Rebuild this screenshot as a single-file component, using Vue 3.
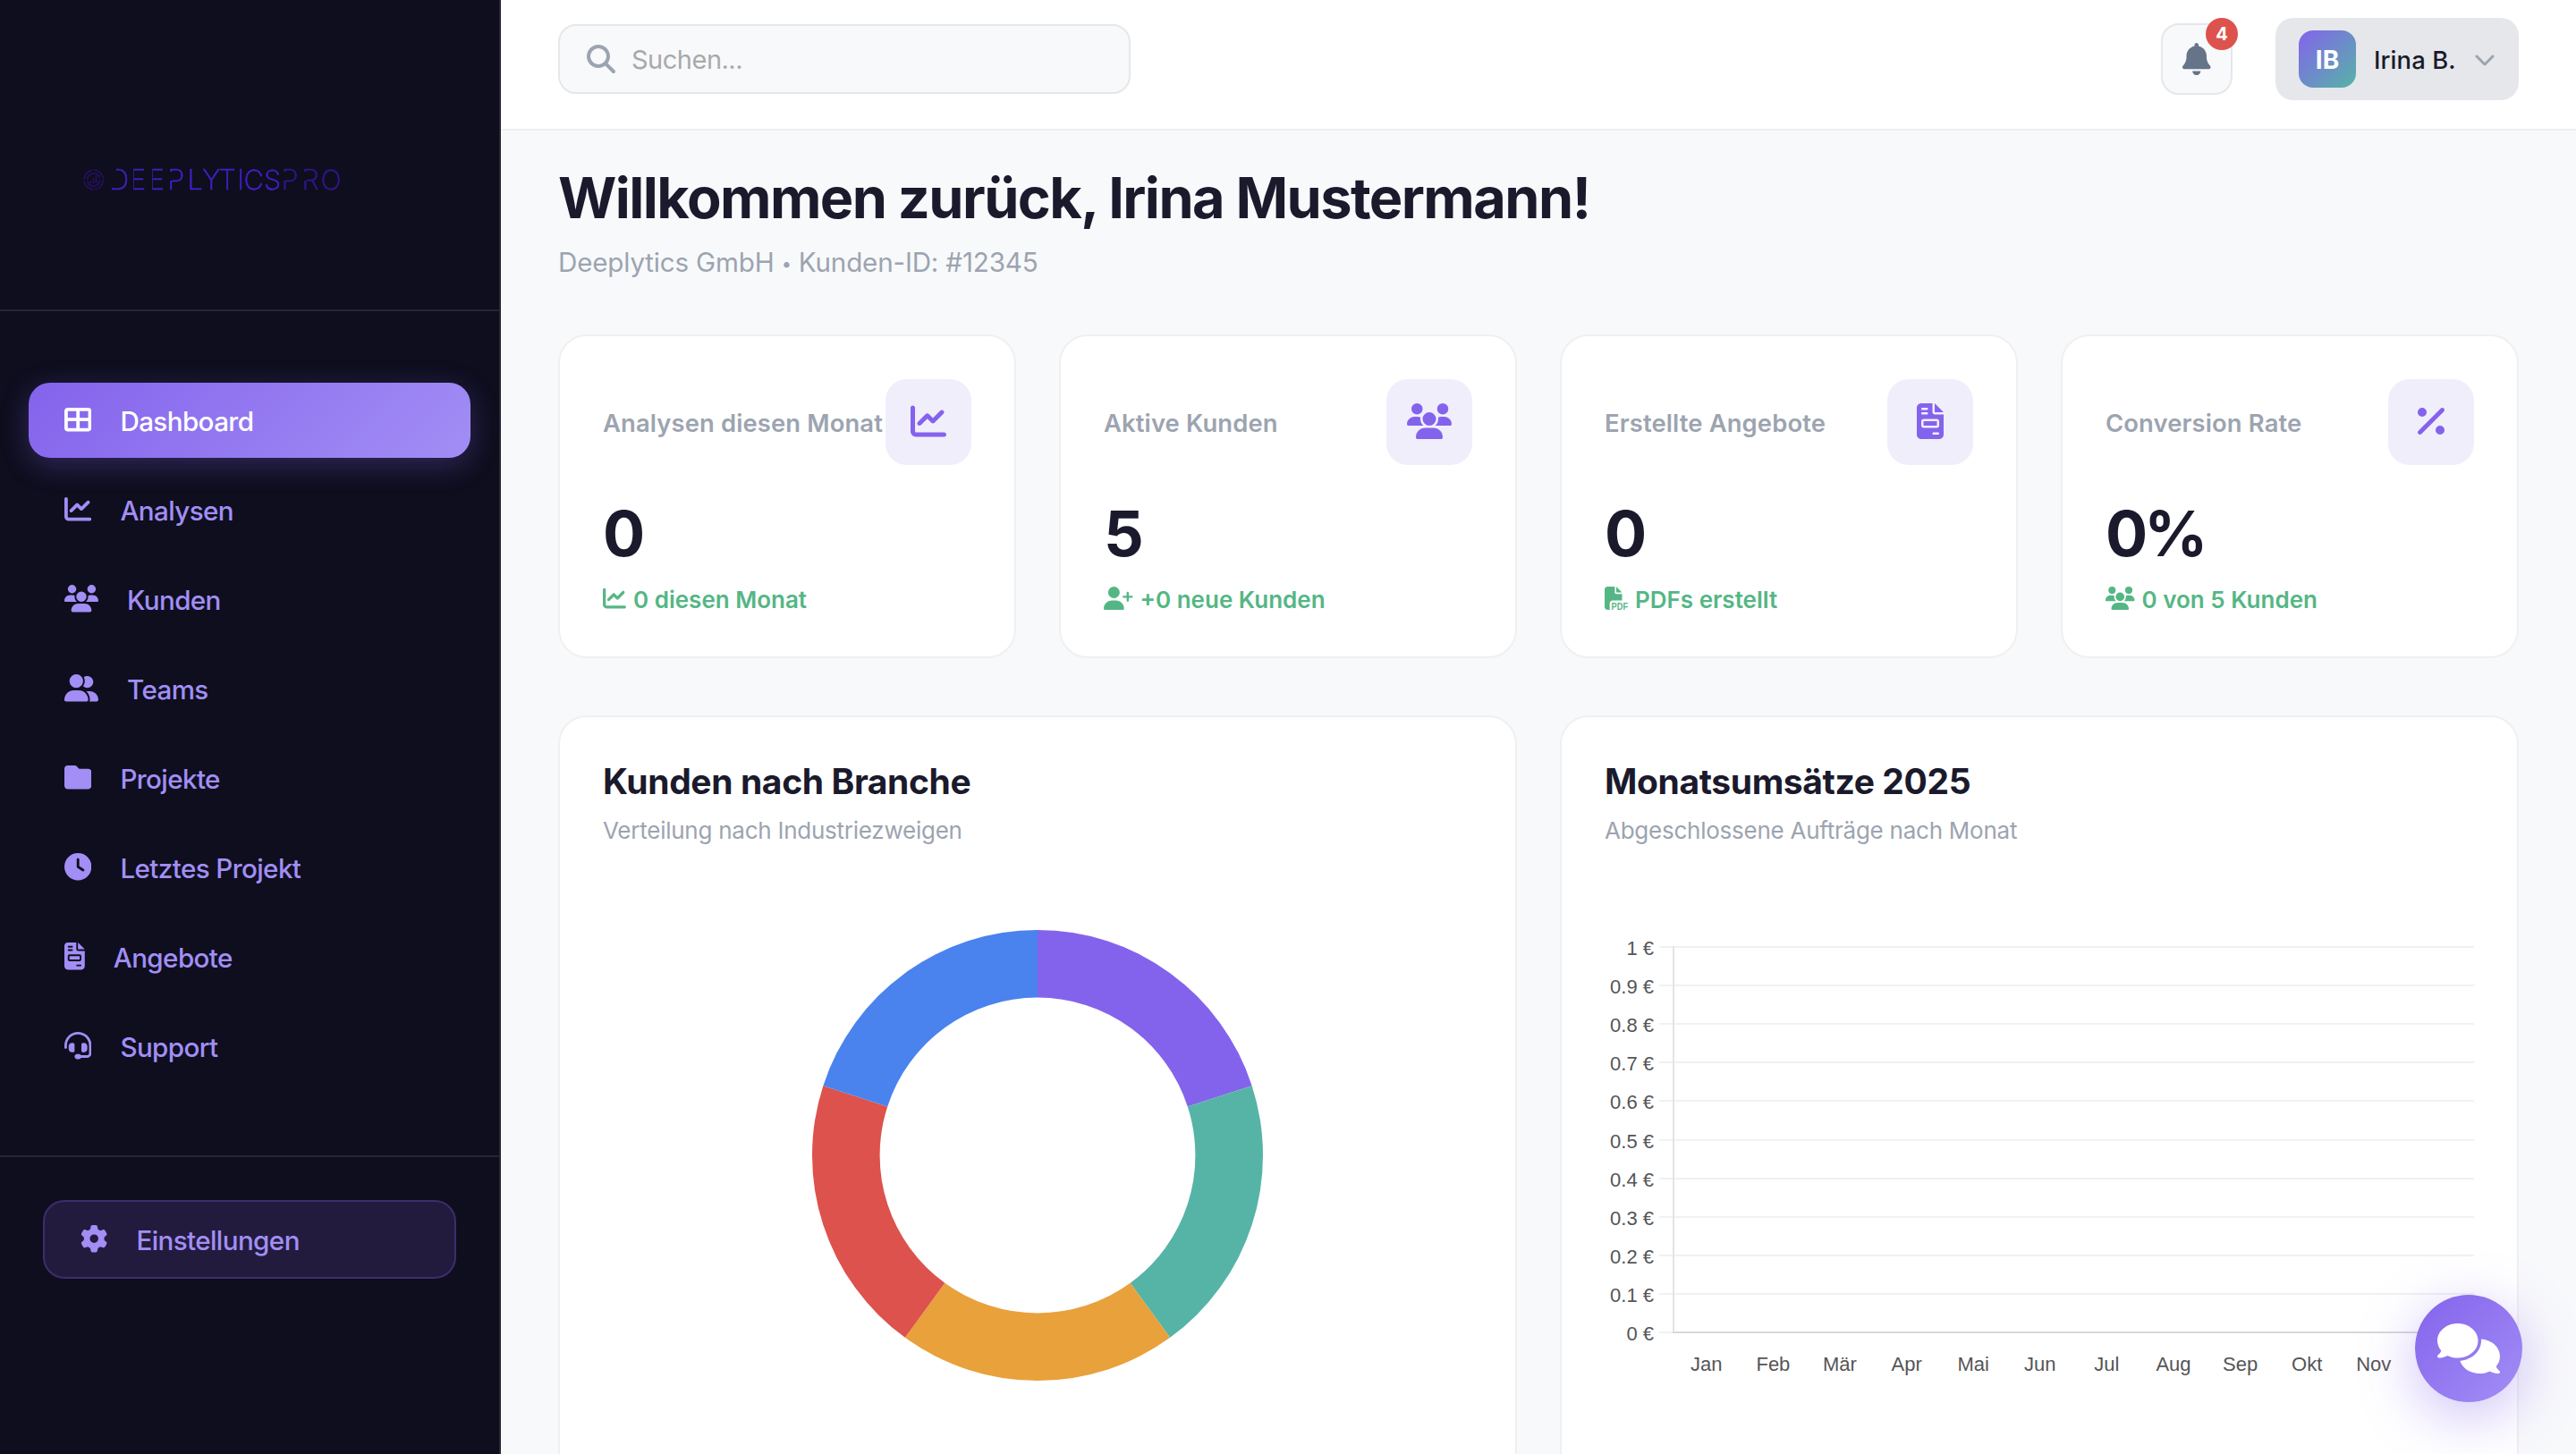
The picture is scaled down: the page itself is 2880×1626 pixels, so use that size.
<script setup>
import { computed, ref } from "vue";

// iconos: ancho del viewBox y trazado
const icons = {
  grid: {
    w: 512,
    d: "M448 96V224H288V96H448zm0 192V416H288V288H448zM224 224H64V96H224V224zM64 288H224V416H64V288zM64 32C28.7 32 0 60.7 0 96V416c0 35.3 28.7 64 64 64H448c35.3 0 64-28.7 64-64V96c0-35.3-28.7-64-64-64H64z",
  },
  chart: {
    w: 512,
    d: "M64 64c0-17.7-14.3-32-32-32S0 46.3 0 64V400c0 44.2 35.8 80 80 80H480c17.7 0 32-14.3 32-32s-14.3-32-32-32H80c-8.8 0-16-7.2-16-16V64zm406.6 86.6c12.5-12.5 12.5-32.8 0-45.3s-32.8-12.5-45.3 0L320 210.7l-57.4-57.4c-12.5-12.5-32.8-12.5-45.3 0l-112 112c-12.5 12.5-12.5 32.8 0 45.3s32.8 12.5 45.3 0L240 221.3l57.4 57.4c12.5 12.5 32.8 12.5 45.3 0l128-128z",
  },
  users: {
    w: 640,
    d: "M144 0a80 80 0 1 1 0 160A80 80 0 1 1 144 0zM512 0a80 80 0 1 1 0 160A80 80 0 1 1 512 0zM0 298.7C0 239.8 47.8 192 106.7 192h42.7c15.9 0 31 3.5 44.6 9.7c-1.3 7.2-1.9 14.7-1.9 22.3c0 38.2 16.8 72.5 43.3 96c-.2 0-.4 0-.7 0H21.3C9.6 320 0 310.4 0 298.7zM405.3 320c-.2 0-.4 0-.7 0c26.6-23.5 43.3-57.8 43.3-96c0-7.6-.7-15-1.9-22.3c13.6-6.3 28.7-9.7 44.6-9.7h42.7C592.2 192 640 239.8 640 298.7c0 11.8-9.6 21.3-21.3 21.3H405.3zM224 224a96 96 0 1 1 192 0 96 96 0 1 1 -192 0zM128 485.3C128 411.7 187.7 352 261.3 352H378.7C452.3 352 512 411.7 512 485.3c0 14.7-11.9 26.7-26.7 26.7H154.7c-14.7 0-26.7-11.9-26.7-26.7z",
  },
  group: {
    w: 640,
    d: "M96 128a128 128 0 1 1 256 0A128 128 0 1 1 96 128zM0 482.3C0 383.8 79.8 304 178.3 304h91.4C368.2 304 448 383.8 448 482.3c0 16.4-13.3 29.7-29.7 29.7H29.7C13.3 512 0 498.7 0 482.3zM609.3 512H471.4c5.4-9.4 8.6-20.3 8.6-32v-8c0-60.7-27.1-115.2-69.8-151.8c2.4-.1 4.7-.2 7.1-.2h61.4C567.8 320 640 392.2 640 481.3c0 17-13.8 30.7-30.7 30.7zM432 256c-31 0-59-12.6-79.3-32.9C372.4 196.5 384 163.6 384 128c0-26.8-6.6-52.1-18.3-74.3C384.3 40.1 407.2 32 432 32c61.9 0 112 50.1 112 112s-50.1 112-112 112z",
  },
  folder: {
    w: 512,
    d: "M64 480H448c35.3 0 64-28.7 64-64V160c0-35.3-28.7-64-64-64H288c-10.1 0-19.6-4.7-25.6-12.8L243.2 57.6C231.1 41.5 212.1 32 192 32H64C28.7 32 0 60.7 0 96V416c0 35.3 28.7 64 64 64z",
  },
  clock: {
    w: 512,
    d: "M256 0a256 256 0 1 1 0 512A256 256 0 1 1 256 0zM232 120V256c0 8 4 15.5 10.7 20l96 64c11 7.4 25.9 4.4 33.3-6.7s4.4-25.9-6.7-33.3L280 243.2V120c0-13.3-10.7-24-24-24s-24 10.7-24 24z",
  },
  invoice: {
    w: 384,
    d: "M64 0C28.7 0 0 28.7 0 64V448c0 35.3 28.7 64 64 64H320c35.3 0 64-28.7 64-64V160H256c-17.7 0-32-14.3-32-32V0H64zM256 0V128H384L256 0zM80 64h64c8.8 0 16 7.2 16 16s-7.2 16-16 16H80c-8.8 0-16-7.2-16-16s7.2-16 16-16zm0 64h64c8.8 0 16 7.2 16 16s-7.2 16-16 16H80c-8.8 0-16-7.2-16-16s7.2-16 16-16zm16 96H288c17.7 0 32 14.3 32 32v64c0 17.7-14.3 32-32 32H96c-17.7 0-32-14.3-32-32V256c0-17.7 14.3-32 32-32zm0 32v64H288V256H96zM240 416h64c8.8 0 16 7.2 16 16s-7.2 16-16 16H240c-8.8 0-16-7.2-16-16s7.2-16 16-16z",
  },
  headset: {
    w: 512,
    d: "M256 48C141.1 48 48 141.1 48 256v40c0 13.3-10.7 24-24 24s-24-10.7-24-24V256C0 114.6 114.6 0 256 0S512 114.6 512 256V400.1c0 48.6-39.4 88-88.1 88L313.6 488c-8.3 14.3-23.8 24-41.6 24H240c-26.5 0-48-21.5-48-48s21.5-48 48-48h32c17.8 0 33.3 9.7 41.6 24l110.4 .1c22.1 0 40-17.9 40-40V256c0-114.9-93.1-208-208-208zM144 208h16c17.7 0 32 14.3 32 32V352c0 17.7-14.3 32-32 32H144c-35.3 0-64-28.7-64-64V272c0-35.3 28.7-64 64-64zm224 0c35.3 0 64 28.7 64 64v48c0 35.3-28.7 64-64 64H352c-17.7 0-32-14.3-32-32V240c0-17.7 14.3-32 32-32h16z",
  },
  gear: {
    w: 512,
    d: "M495.9 166.6c3.2 8.7 .5 18.4-6.4 24.6l-43.3 39.4c1.1 8.3 1.7 16.8 1.7 25.4s-.6 17.1-1.7 25.4l43.3 39.4c6.9 6.2 9.6 15.9 6.4 24.6c-4.4 11.9-9.7 23.3-15.8 34.3l-4.7 8.1c-6.6 11-14 21.4-22.1 31.2c-5.9 7.2-15.7 9.6-24.5 6.8l-55.7-17.7c-13.4 10.3-28.2 18.9-44 25.4l-12.5 57.1c-2 9.1-9 16.3-18.2 17.8c-13.8 2.3-28 3.5-42.5 3.5s-28.7-1.2-42.5-3.5c-9.2-1.5-16.2-8.7-18.2-17.8l-12.5-57.1c-15.8-6.5-30.6-15.1-44-25.4L83.1 425.9c-8.8 2.8-18.6 .3-24.5-6.8c-8.1-9.8-15.5-20.2-22.1-31.2l-4.7-8.1c-6.1-11-11.4-22.4-15.8-34.3c-3.2-8.7-.5-18.4 6.4-24.6l43.3-39.4C64.6 273.1 64 264.6 64 256s.6-17.1 1.7-25.4L22.4 191.2c-6.9-6.2-9.6-15.9-6.4-24.6c4.4-11.9 9.7-23.3 15.8-34.3l4.7-8.1c6.6-11 14-21.4 22.1-31.2c5.9-7.2 15.7-9.6 24.5-6.8l55.7 17.7c13.4-10.3 28.2-18.9 44-25.4l12.5-57.1c2-9.1 9-16.3 18.2-17.8C227.3 1.2 241.5 0 256 0s28.7 1.2 42.5 3.5c9.2 1.5 16.2 8.7 18.2 17.8l12.5 57.1c15.8 6.5 30.6 15.1 44 25.4l55.7-17.7c8.8-2.8 18.6-.3 24.5 6.8c8.1 9.8 15.5 20.2 22.1 31.2l4.7 8.1c6.1 11 11.4 22.4 15.8 34.3zM256 336a80 80 0 1 0 0-160 80 80 0 1 0 0 160z",
  },
  percent: {
    w: 384,
    d: "M374.6 118.6c12.5-12.5 12.5-32.8 0-45.3s-32.8-12.5-45.3 0l-320 320c-12.5 12.5-12.5 32.8 0 45.3s32.8 12.5 45.3 0l320-320zM128 128A64 64 0 1 0 0 128a64 64 0 1 0 128 0zM384 384a64 64 0 1 0 -128 0 64 64 0 1 0 128 0z",
  },
  userPlus: {
    w: 640,
    d: "M96 128a128 128 0 1 1 256 0A128 128 0 1 1 96 128zM0 482.3C0 383.8 79.8 304 178.3 304h91.4C368.2 304 448 383.8 448 482.3c0 16.4-13.3 29.7-29.7 29.7H29.7C13.3 512 0 498.7 0 482.3zM504 312V248H440c-13.3 0-24-10.7-24-24s10.7-24 24-24h64V136c0-13.3 10.7-24 24-24s24 10.7 24 24v64h64c13.3 0 24 10.7 24 24s-10.7 24-24 24H552v64c0 13.3-10.7 24-24 24s-24-10.7-24-24z",
  },
  pdf: {
    w: 512,
    d: "M0 64C0 28.7 28.7 0 64 0H224V128c0 17.7 14.3 32 32 32H384V304H176c-35.3 0-64 28.7-64 64V512H64c-35.3 0-64-28.7-64-64V64zm384 64H256V0L384 128z",
    label: "PDF",
  },
};

const activeItem = ref("Dashboard");

const menu = [
  { name: "Dashboard", icon: icons.grid },
  { name: "Analysen", icon: icons.chart },
  { name: "Kunden", icon: icons.users },
  { name: "Teams", icon: icons.group },
  { name: "Projekte", icon: icons.folder },
  { name: "Letztes Projekt", icon: icons.clock },
  { name: "Angebote", icon: icons.invoice },
  { name: "Support", icon: icons.headset },
];

const stats = [
  { label: "Analysen diesen Monat", value: "0", icon: icons.chart, trend: "0 diesen Monat", trendIcon: icons.chart },
  { label: "Aktive Kunden", value: "5", icon: icons.users, trend: "+0 neue Kunden", trendIcon: icons.userPlus },
  { label: "Erstellte Angebote", value: "0", icon: icons.invoice, trend: "PDFs erstellt", trendIcon: icons.pdf },
  { label: "Conversion Rate", value: "0%", icon: icons.percent, trend: "0 von 5 Kunden", trendIcon: icons.users },
];

const branches = [
  { value: 1, color: "#8463ec" },
  { value: 1, color: "#56b4a7" },
  { value: 1, color: "#e8a13b" },
  { value: 1, color: "#dd524c" },
  { value: 1, color: "#4a83ee" },
];

// segmentos del donut
const segments = computed(() => {
  const total = branches.reduce((sum, b) => sum + b.value, 0);
  const point = (r, a) => `${252 + r * Math.sin(a)} ${252 - r * Math.cos(a)}`;
  let start = 0;
  return branches.map((b) => {
    const end = start + (b.value / total) * Math.PI * 2;
    const d = `M${point(252, start)}A252 252 0 0 1 ${point(252, end)}L${point(176.4, end)}A176.4 176.4 0 0 0 ${point(176.4, start)}Z`;
    start = end;
    return { d, color: b.color };
  });
});

const months = ["Jan", "Feb", "Mär", "Apr", "Mai", "Jun", "Jul", "Aug", "Sep", "Okt", "Nov", "Dez"];

// líneas del eje Y, de 1 € hasta 0 €
const gridLines = Array.from({ length: 11 }, (_, i) => ({
  y: Math.round(115 + i * 43.1),
  label: `${(10 - i) / 10} €`,
}));
</script>

<template>
  <div class="app">
    <aside class="sidebar">
      <div class="sidebar-logo">
        <svg class="logo" width="310" height="60" viewBox="88 170 310 60">
          <defs>
            <mask id="cut" maskUnits="userSpaceOnUse" x="88" y="170" width="310" height="60">
              <rect x="88" y="170" width="310" height="60" fill="#fff" />
              <rect x="120" y="192" width="9" height="18" />
              <rect x="120" y="186" width="10" height="10" />
              <rect x="144" y="186" width="5.2" height="30" />
              <rect x="165" y="186" width="5.2" height="30" />
              <rect x="188" y="192" width="5" height="10" />
              <rect x="314" y="192" width="6" height="10" />
              <rect x="338" y="192" width="5" height="10" />
            </mask>
          </defs>
          <g class="logo-mark">
            <circle cx="104.7" cy="201" r="10.8" stroke-dasharray="15 2" />
            <circle cx="104.7" cy="201" r="7.2" stroke-dasharray="20.6 2" />
            <path d="M101.5 205v-3M104.5 205v-6M107.5 205v-9" />
          </g>
          <g class="logo-text" mask="url(#cut)">
            <text
              class="logo-name"
              y="212.3"
              x="122 145 166 187.3 209.5 226.3 244.6 265.2 272.6 295"
            >DEEPLYTICS</text>
            <text class="logo-pro" y="212.3" x="314.6 337.6 358.6">PRO</text>
          </g>
        </svg>
      </div>

      <nav class="menu">
        <a
          v-for="item in menu"
          :key="item.name"
          class="menu-item"
          :class="{ active: item.name === activeItem }"
          @click="activeItem = item.name"
        >
          <svg class="icon" :viewBox="`0 0 ${item.icon.w} 512`">
            <path fill-rule="evenodd" :d="item.icon.d" />
          </svg>
          <span>{{ item.name }}</span>
        </a>
      </nav>

      <div class="sidebar-footer">
        <a class="settings">
          <svg class="icon" viewBox="0 0 512 512"><path :d="icons.gear.d" /></svg>
          <span>Einstellungen</span>
        </a>
      </div>
    </aside>

    <main class="main">
      <header class="topbar">
        <div class="search">
          <svg class="search-icon" viewBox="0 0 512 512">
            <path
              d="M416 208c0 45.9-14.9 88.3-40 122.7L502.6 457.4c12.5 12.5 12.5 32.8 0 45.3s-32.8 12.5-45.3 0L330.7 376c-34.4 25.2-76.8 40-122.7 40C93.1 416 0 322.9 0 208S93.1 0 208 0S416 93.1 416 208zM208 352a144 144 0 1 0 0-288 144 144 0 1 0 0 288z"
            />
          </svg>
          <span>Suchen...</span>
        </div>
        <div class="topbar-right">
          <div class="bell">
            <svg class="bell-icon" viewBox="0 0 448 512">
              <path
                d="M224 0c-17.7 0-32 14.3-32 32V51.2C119 66 64 130.6 64 208v18.8c0 47-17.3 92.4-48.5 127.6l-7.4 8.3c-8.4 9.4-10.4 22.9-5.3 34.4S19.4 416 32 416H416c12.6 0 24-7.4 29.2-18.9s3.1-25-5.3-34.4l-7.4-8.3C401.3 319.2 384 273.9 384 226.8V208c0-77.4-55-142-128-156.8V32c0-17.7-14.3-32-32-32zm45.3 493.3c12-12 18.7-28.3 18.7-45.3H224 160c0 17 6.7 33.3 18.7 45.3s28.3 18.7 45.3 18.7s33.3-6.7 45.3-18.7z"
              />
            </svg>
            <span class="badge">4</span>
          </div>
          <div class="profile">
            <div class="avatar">IB</div>
            <span class="profile-name">Irina B.</span>
            <svg class="chevron" viewBox="0 0 512 512">
              <path
                d="M233.4 406.6c12.5 12.5 32.8 12.5 45.3 0l192-192c12.5-12.5 12.5-32.8 0-45.3s-32.8-12.5-45.3 0L256 338.7 86.6 169.4c-12.5-12.5-32.8-12.5-45.3 0s-12.5 32.8 0 45.3l192 192z"
              />
            </svg>
          </div>
        </div>
      </header>

      <div class="content">
        <h1>Willkommen zurück, Irina Mustermann!</h1>
        <p class="subtitle">Deeplytics GmbH <span class="dot">•</span> Kunden-ID: #12345</p>

        <section class="stats">
          <div v-for="stat in stats" :key="stat.label" class="card stat">
            <div class="stat-head">
              <span class="stat-label">{{ stat.label }}</span>
              <div class="stat-icon">
                <svg class="icon" :viewBox="`0 0 ${stat.icon.w} 512`">
                  <path fill-rule="evenodd" :d="stat.icon.d" />
                </svg>
              </div>
            </div>
            <div class="stat-value">{{ stat.value }}</div>
            <div class="stat-trend">
              <svg class="icon" :viewBox="`0 0 ${stat.trendIcon.w} 512`">
                <path :d="stat.trendIcon.d" />
                <text v-if="stat.trendIcon.label" class="icon-label" x="150" y="508" textLength="362" lengthAdjust="spacingAndGlyphs">{{ stat.trendIcon.label }}</text>
              </svg>
              <span>{{ stat.trend }}</span>
            </div>
          </div>
        </section>

        <section class="charts">
          <div class="card chart-card">
            <h2>Kunden nach Branche</h2>
            <p>Verteilung nach Industriezweigen</p>
            <svg class="donut" width="504" height="504" viewBox="0 0 504 504">
              <path v-for="s in segments" :key="s.color" :d="s.d" :fill="s.color" />
            </svg>
          </div>

          <div class="card chart-card">
            <h2>Monatsumsätze 2025</h2>
            <p>Abgeschlossene Aufträge nach Monat</p>
            <svg class="bars" width="972" height="640" viewBox="0 0 972 640">
              <g v-for="line in gridLines" :key="line.label">
                <line class="grid" x1="61" x2="972" :y1="line.y" :y2="line.y" />
                <text class="tick end" x="55" :y="line.y + 9">{{ line.label }}</text>
              </g>
              <line class="axis" x1="77" x2="77" y1="114" y2="547" />
              <line class="axis base" x1="76" x2="972" y1="546" y2="546" />
              <text
                v-for="(month, i) in months"
                :key="month"
                class="tick middle"
                :x="76.5 + (i + 0.5) * 74.6"
                y="589"
              >{{ month }}</text>
            </svg>
          </div>
        </section>
      </div>
    </main>

    <button class="chat">
      <svg viewBox="0 0 640 512">
        <path
          d="M208 352c114.9 0 208-78.9 208-176S322.9 0 208 0S0 78.9 0 176c0 38.6 14.7 74.3 39.6 103.4c-3.5 9.4-8.7 17.7-14.2 24.7c-4.8 6.2-9.7 11-13.3 14.3c-1.8 1.6-3.3 2.9-4.3 3.7c-.5 .4-.9 .7-1.1 .8l-.2 .2 0 0 0 0C1 327.2-1.4 334.4 .8 340.9S9.1 352 16 352c21.8 0 43.8-5.6 62.1-12.5c9.2-3.5 17.8-7.4 25.3-11.4C134.1 343.3 169.8 352 208 352zM448 176c0 112.3-99.1 196.9-216.5 207C255.8 457.4 336.4 512 432 512c38.2 0 73.9-8.7 104.7-23.9c7.5 4 16 7.9 25.2 11.4c18.3 6.9 40.3 12.5 62.1 12.5c6.9 0 13.1-4.5 15.2-11.1c2.1-6.6-.2-13.8-5.8-17.9l0 0 0 0-.2-.2c-.2-.2-.6-.4-1.1-.8c-1-.8-2.5-2-4.3-3.7c-3.6-3.3-8.5-8.1-13.3-14.3c-5.5-7-10.7-15.4-14.2-24.7c24.9-29 39.6-64.7 39.6-103.4c0-92.8-84.9-168.9-192.6-175.5c.4 5.1 .6 10.3 .6 15.5z"
        />
      </svg>
    </button>
  </div>
</template>

<style>
body {
  margin: 0;
  overflow: hidden;
}
</style>

<style scoped>
* {
  box-sizing: border-box;
}

.app {
  display: flex;
  height: 1626px;
  overflow: hidden;
  background: #f8f9fb;
  color: #1a1a2c;
  font-family: Inter, "Liberation Sans", sans-serif;
}

svg {
  display: block;
  flex-shrink: 0;
}

.icon {
  height: 1em;
  fill: currentColor;
}

/* sidebar */
.sidebar {
  width: 560px;
  flex-shrink: 0;
  background: #0e0e1e;
  border-right: 2px solid #262533;
}

.sidebar-logo {
  height: 348px;
  padding: 170px 88px 0;
  border-bottom: 2px solid #262533;
}

.logo-mark {
  fill: none;
  stroke: #26105c;
  stroke-width: 1.7;
}

.logo-text {
  font-family: Inter, sans-serif;
  font-size: 30.7px;
  font-weight: 200;
  stroke-width: 0.6;
}

.logo-name {
  fill: #4320c4;
  stroke: #4320c4;
}

.logo-pro {
  fill: #32168c;
  stroke: #32168c;
}

.menu {
  display: flex;
  flex-direction: column;
  gap: 16px;
  padding: 80px 32px;
}

.menu-item,
.settings {
  display: flex;
  align-items: center;
  gap: 32px;
  border-radius: 24px;
  color: #a28ef5;
  font-size: 29.6px;
  font-weight: 500;
  letter-spacing: -0.6px;
  cursor: pointer;
}

.menu-item .icon,
.settings .icon {
  height: 30.4px;
  margin-top: -1px;
}

.menu-item span,
.settings span {
  padding-top: 2px;
}

.menu-item {
  height: 84px;
  padding: 0 40px;
}

.menu-item.active {
  color: #fff;
  background: linear-gradient(135deg, #8463ec, #a28ef5);
  box-shadow: 0 8px 32px rgba(132, 99, 236, 0.3);
}

.sidebar-footer {
  padding: 48px;
  border-top: 2px solid #262533;
}

.settings {
  height: 88px;
  padding: 0 40px;
  background: #221b3d;
  border: 2px solid #3d2d6e;
}

/* cabecera */
.main {
  flex: 1;
  min-width: 0;
}

.topbar {
  display: flex;
  align-items: center;
  justify-content: space-between;
  height: 146px;
  padding: 20px 64px 32px;
  background: #fff;
  border-bottom: 2px solid #efeff1;
}

.search {
  display: flex;
  align-items: center;
  gap: 18px;
  width: 640px;
  height: 78px;
  padding: 0 30px;
  background: #f8f9fb;
  border: 2px solid #e5e7ea;
  border-radius: 20px;
  color: #a9a9a9;
  font-size: 29px;
  letter-spacing: -0.5px;
}

.search-icon {
  height: 32px;
  fill: #9ca4b0;
}

.topbar-right {
  display: flex;
  align-items: center;
  gap: 48px;
}

.bell {
  position: relative;
  display: flex;
  align-items: center;
  justify-content: center;
  width: 80px;
  height: 80px;
  background: #f8f9fb;
  border: 2px solid #e5e7ea;
  border-radius: 20px;
}

.bell-icon {
  height: 36px;
  fill: #667489;
}

.badge {
  position: absolute;
  top: -8px;
  right: -8px;
  width: 36px;
  height: 36px;
  border-radius: 50%;
  background: #dd524c;
  color: #fff;
  font-size: 20px;
  font-weight: 700;
  line-height: 37px;
  text-align: center;
}

.profile {
  display: flex;
  align-items: center;
  gap: 20px;
  width: 272px;
  height: 92px;
  padding: 0 26px;
  background: #e5e7ea;
  border-radius: 20px;
}

.avatar {
  width: 64px;
  height: 64px;
  border-radius: 16px;
  background: linear-gradient(135deg, #8463ec, #56b4a7);
  color: #fff;
  font-size: 28px;
  font-weight: 700;
  line-height: 66px;
  text-align: center;
}

.profile-name {
  flex: 1;
  padding-top: 1px;
  font-size: 27.4px;
  font-weight: 500;
  letter-spacing: 0.1px;
  white-space: nowrap;
}

.chevron {
  height: 24px;
  fill: #9ca4b0;
}

/* contenido */
.content {
  padding: 37px 64px 0;
}

h1 {
  margin: 0;
  font-size: 63px;
  font-weight: 700;
  line-height: 76px;
  letter-spacing: -1.56px;
}

.subtitle {
  margin: 14px 0 61px;
  color: #9ca4b0;
  font-size: 29.6px;
  line-height: 40px;
  letter-spacing: -0.18px;
}

.dot {
  font-size: 20px;
  line-height: 0;
  vertical-align: 2px;
}

.stats {
  display: grid;
  grid-template-columns: repeat(4, 1fr);
  gap: 48px;
}

.card {
  padding: 48px;
  background: #fff;
  border: 2px solid #f0f0f1;
  border-radius: 32px;
}

.stat {
  height: 362px;
}

.stat-head {
  display: flex;
  align-items: center;
  justify-content: space-between;
}

.stat-label {
  padding-top: 2px;
  color: #9ca4b0;
  font-size: 27.4px;
  font-weight: 600;
  letter-spacing: 0.13px;
  white-space: nowrap;
}

.stat-icon {
  display: flex;
  align-items: center;
  justify-content: center;
  flex-shrink: 0;
  width: 96px;
  height: 96px;
  padding-bottom: 2px;
  border-radius: 24px;
  background: #f1eefc;
  color: #8463ec;
  font-size: 40px;
}

.stat-value {
  margin-top: 42px;
  font-size: 70px;
  font-weight: 700;
  line-height: 70px;
  letter-spacing: -4px;
}

.stat-trend {
  display: flex;
  gap: 8px;
  margin-top: 23px;
  color: #55b685;
  font-size: 26px;
  font-weight: 600;
  line-height: 32px;
  white-space: nowrap;
}

.stat-trend .icon {
  margin-top: 1px;
  overflow: visible;
}

.icon-label {
  font-family: "Liberation Sans", sans-serif;
  font-size: 215px;
  font-weight: 700;
}

.charts {
  display: grid;
  grid-template-columns: 1fr 1fr;
  gap: 48px;
  margin-top: 64px;
}

.chart-card {
  height: 900px;
}

h2 {
  margin: 0;
  font-size: 39px;
  font-weight: 700;
  line-height: 48px;
  letter-spacing: -0.38px;
}

.chart-card p {
  margin: 15px 0 0;
  color: #9ca4b0;
  font-size: 26px;
  line-height: 32px;
  letter-spacing: -0.25px;
}

.donut {
  margin: 95px auto 0;
}

.bars {
  margin-top: -1px;
}

.grid {
  stroke: #f1f1f2;
  stroke-width: 2;
}

.axis {
  stroke: #e4e4e6;
  stroke-width: 2;
}

.axis.base {
  stroke: #d8d8da;
}

.tick {
  fill: #555557;
  font-family: "Liberation Sans", sans-serif;
  font-size: 22px;
}

.end {
  text-anchor: end;
}

.middle {
  text-anchor: middle;
}

/* botón de chat */
.chat {
  position: absolute;
  left: 2700px;
  top: 1448px;
  display: flex;
  align-items: center;
  justify-content: center;
  width: 120px;
  height: 120px;
  padding: 0;
  border: none;
  border-radius: 50%;
  background: linear-gradient(135deg, #8463ec, #a28ef5);
  box-shadow: 0 16px 64px rgba(132, 99, 236, 0.4);
}

.chat svg {
  height: 56px;
  fill: #fff;
}
</style>
